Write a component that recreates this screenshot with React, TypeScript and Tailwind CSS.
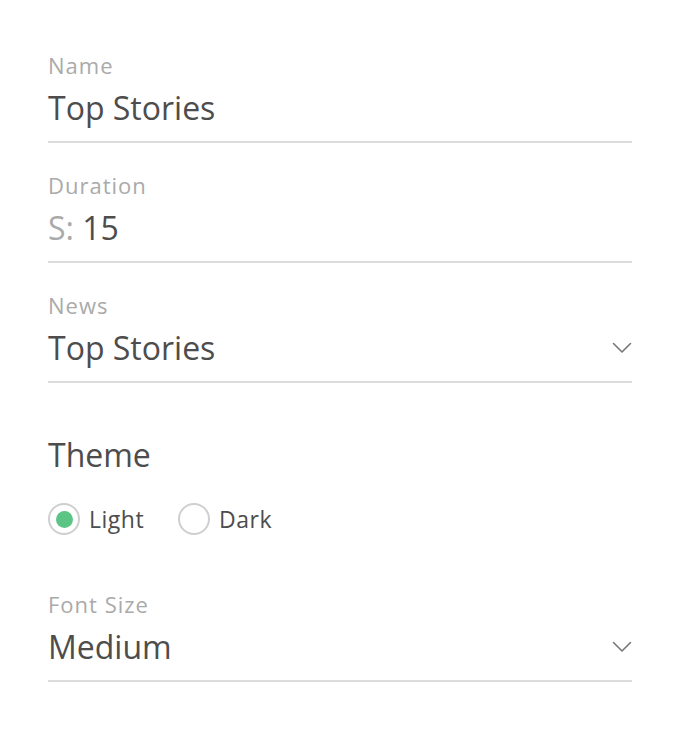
import { useState } from 'react'

const font = { fontFamily: '"Open Sans", "Noto Sans", sans-serif' }

function Chevron() {
  return (
    <svg width="20" height="12" viewBox="0 0 20 12" fill="none" className="shrink-0">
      <path d="M1.5 1.5 L10 10 L18.5 1.5" stroke="#777" strokeWidth="1.6" strokeLinecap="round" strokeLinejoin="round" />
    </svg>
  )
}

function Field({ label, children, select }: { label: string; children: React.ReactNode; select?: boolean }) {
  return (
    <div className="border-b-2 border-[#dcdcdc] pb-[13px]">
      <div className="text-[22px] leading-[26px] tracking-[1px] text-[#aaaaaa]">{label}</div>
      <div className="mt-[10px] flex items-center justify-between">
        <div className="text-[32px] leading-[40px] text-[#4d4d4d]">{children}</div>
        {select && <Chevron />}
      </div>
    </div>
  )
}

function Radio({ label, checked, onClick }: { label: string; checked: boolean; onClick: () => void }) {
  return (
    <button onClick={onClick} className="flex items-center gap-[9px]">
      <span className="flex h-[32px] w-[32px] items-center justify-center rounded-full border-2 border-[#cfcfcf]">
        {checked && <span className="h-[17px] w-[17px] rounded-full bg-[#5cc585]" />}
      </span>
      <span className="text-[23px] leading-[30px] tracking-[0.5px] text-[#4d4d4d]">{label}</span>
    </button>
  )
}

export default function App() {
  const [theme, setTheme] = useState<'light' | 'dark'>('light')

  return (
    <div className="min-h-[736px] bg-white px-[48px] pt-[52px]" style={font}>
      <div className="w-[584px] space-y-[29px]">
        <Field label="Name">Top Stories</Field>
        <Field label="Duration">
          <span className="text-[#aaaaaa]">S:</span> 15
        </Field>
        <Field label="News" select>Top Stories</Field>
      </div>

      {/* Theme */}
      <div className="mt-[52px] text-[32px] leading-[40px] text-[#4d4d4d]">Theme</div>
      <div className="mt-[28px] flex items-center gap-[34px]">
        <Radio label="Light" checked={theme === 'light'} onClick={() => setTheme('light')} />
        <Radio label="Dark" checked={theme === 'dark'} onClick={() => setTheme('dark')} />
      </div>

      <div className="mt-[56px] w-[584px]">
        <Field label="Font Size" select>Medium</Field>
      </div>
    </div>
  )
}
